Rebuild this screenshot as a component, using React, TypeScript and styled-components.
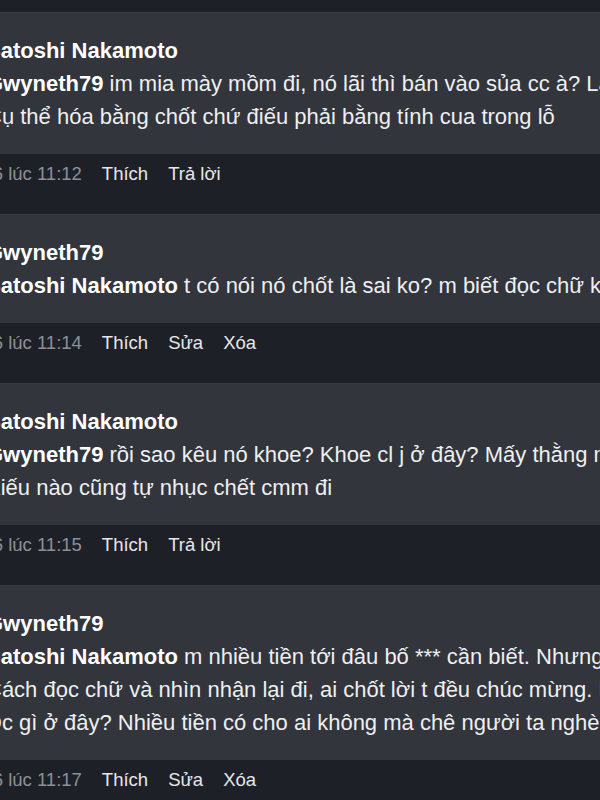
import * as React from 'react'
import styled, { createGlobalStyle } from 'styled-components'

interface CommentData {
  author: string
  replyTo: string
  lines: string[]
  time: string
  actions: string[]
}

const comments: CommentData[] = [
  {
    author: 'Satoshi Nakamoto',
    replyTo: 'Gwyneth79',
    lines: [
      'im mia mày mồm đi, nó lãi thì bán vào sủa cc à? Lãi',
      'Cụ thể hóa bằng chốt chứ điếu phải bằng tính cua trong lỗ',
    ],
    time: '26/6 lúc 11:12',
    actions: ['Thích', 'Trả lời'],
  },
  {
    author: 'Gwyneth79',
    replyTo: 'Satoshi Nakamoto',
    lines: ['t có nói nó chốt là sai ko? m biết đọc chữ không'],
    time: '26/6 lúc 11:14',
    actions: ['Thích', 'Sửa', 'Xóa'],
  },
  {
    author: 'Satoshi Nakamoto',
    replyTo: 'Gwyneth79',
    lines: [
      'rồi sao kêu nó khoe? Khoe cl j ở đây? Mấy thằng mồm',
      'Kiếu nào cũng tự nhục chết cmm đi',
    ],
    time: '26/6 lúc 11:15',
    actions: ['Thích', 'Trả lời'],
  },
  {
    author: 'Gwyneth79',
    replyTo: 'Satoshi Nakamoto',
    lines: [
      'm nhiều tiền tới đâu bố *** cần biết. Nhưng',
      'Cách đọc chữ và nhìn nhận lại đi, ai chốt lời t đều chúc mừng. Mày',
      'Đc gì ở đây? Nhiều tiền có cho ai không mà chê người ta nghèo',
    ],
    time: '26/6 lúc 11:17',
    actions: ['Thích', 'Sửa', 'Xóa'],
  },
]

const GlobalStyle = createGlobalStyle`
  html, body {
    margin: 0;
    padding: 0;
    background: #1e2028;
    overflow: hidden;
  }
  body {
    font-family: 'Liberation Sans', Arial, Helvetica, sans-serif;
  }
`

// the thread is wider than the window; its left edge sits off-screen
const Thread = styled.div`
  width: 800px;
  margin-left: -59px;
  padding-top: 12px;
  display: flex;
  flex-direction: column;
`

const Card = styled.div`
  background: #32353c;
  border-top: 1px solid #383b42;
  padding: 21px 0 21px 45px;
  color: #eeeff1;
  font-size: 22px;
  line-height: 33px;
  white-space: nowrap;
  overflow: hidden;
`

const Author = styled.div`
  font-weight: 700;
  color: #ffffff;
`

const Line = styled.div``

const Mention = styled.span`
  font-weight: 700;
  color: #ffffff;
`

const Footer = styled.div`
  display: flex;
  gap: 20px;
  height: 22px;
  padding: 9px 0 29px 26px;
  font-size: 18.5px;
  line-height: 22px;
  white-space: nowrap;
`

const Time = styled.span`
  color: #8d9096;
`

const Action = styled.span`
  color: #e6e7ea;
  cursor: pointer;
`

function Comment({ data }: { data: CommentData }) {
  return (
    <>
      <Card>
        <Author>{data.author}</Author>
        {data.lines.map((line, i) => (
          <Line key={i}>
            {i === 0 && <Mention>{data.replyTo} </Mention>}
            {line}
          </Line>
        ))}
      </Card>
      <Footer>
        <Time>{data.time}</Time>
        {data.actions.map((a) => (
          <Action key={a}>{a}</Action>
        ))}
      </Footer>
    </>
  )
}

export default function App() {
  return (
    <>
      <GlobalStyle />
      <Thread>
        {comments.map((c, i) => (
          <Comment key={i} data={c} />
        ))}
      </Thread>
    </>
  )
}
